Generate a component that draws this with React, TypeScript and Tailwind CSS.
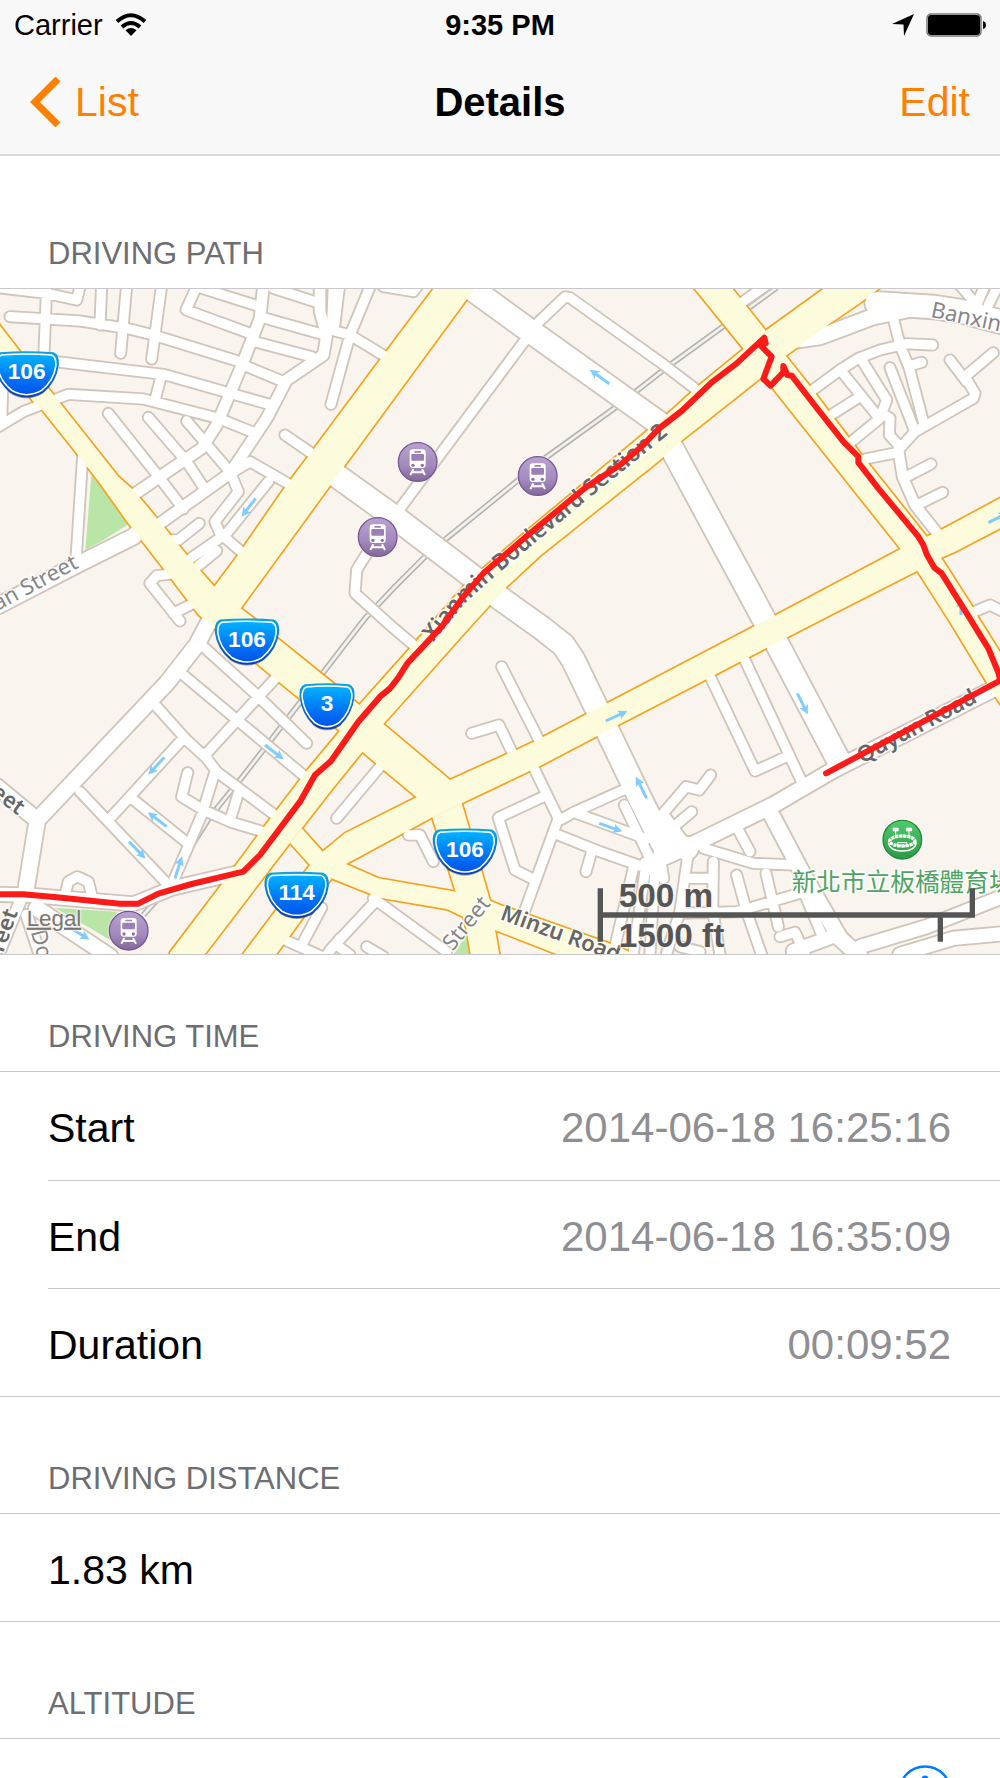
import type { ReactNode } from "react";

// Map drawing units: 3 per pixel at a width of 1000px.
const streets = [
  {
    width: 28,
    d: `M30 95L240 108L380 130L460 150L720 230 M-5 8L140 25L230 45L240 5 M140 5L132 205 M305 0L300 120 M380 0L362 205 M485 0L455 222
    M150 228L490 268L690 325L815 360 M-5 425L70 380L205 328L430 342L655 400L755 440 M8 300L5 410 M482 280L465 345
    M590 5L558 75L750 145 M590 5L780 65 M820 10L960 55 M790 98L975 150 M765 170L935 215 M730 240L850 290 M1000 5L995 130
    M325 385L480 580L550 672 M445 397L560 530L618 618 M560 408L690 560L715 620L645 710L660 745L735 810
    M700 560L750 530L875 602 M805 590L680 745L565 825 M598 715L535 765L505 765 M650 797L580 855 M855 450L945 512
    M505 868L470 872L450 895L540 1008 M520 985L580 955 M248 515L228 825
    M1110 5L1050 150L993 358 M1018 5L1003 130 M975 130L1050 150L1165 220 M1150 5L1240 20L1255 0
    M1572 170L1204 665 M1615 112L1695 36L1710 38L1990 238L2090 315 M2215 60L2300 0 M1110 790L1070 855L1065 925L1170 1020L1250 1088
    M2680 100L2700 180L2728 250L2770 410 M2798 180L2720 176L2640 195L2575 220L2520 255L2425 325 M2765 232L2730 242
    M2670 248L2745 440 M2585 225L2660 345L2645 385L2670 400L2668 450L2695 480 M2525 260L2630 390 M2485 395L2580 335
    M2548 475L2640 400 M2580 525L2695 502 M2695 495L2745 440L2920 340L2925 325L2895 275L2980 203 M2850 225L2900 290
    M2793 537L2720 575 M2828 622L2755 658 M3010 980L2970 960L2900 990 M2880 0L2930 60 M2955 0L2930 60 M2995 0L2965 60
    M610 1085L770 1230L920 1375 M550 1170L915 1475 M470 1265L560 1365L620 1420L650 1460L835 1598 M835 1170L620 1405
    M545 1365L335 1595 M240 1520L500 1795 M395 1540L560 1672 M645 1460L605 1590L515 1800
    M563 1463L545 1535L610 1575L690 1610L795 1642 M715 1525L692 1600 M195 1830L205 1790L232 1775L265 1790L275 1830
    M965 1868L905 1980 M855 1965L960 2012 M1020 1960L980 2010 M1140 1445L1010 1600
    M1505 1145L1622 1375 M1600 1445L1675 1600L1575 1875 M1415 1345L1497 1320L1540 1410 M1630 1535L1495 1598L1545 1755L1595 1780
    M1680 1605L1725 1580L1885 1508 M1730 1585L1940 1662 M1675 1650L1800 1700L1965 1758 M1873 1560L1945 1710 M1775 1700L1758 1760
    M1225 1650L1260 1650L1300 1730 M1130 1845L990 1995 M1120 1840L1340 2000 M1100 1985L1150 2015 M1010 1980L1050 2010
    M1900 1750L1840 2005 M1935 1760L1900 2005 M1965 1750L1950 2005
    M2230 1115L2405 1490 M2128 1170L2265 1458L2365 1412 M2215 1635L2250 1700 M2110 1690L2260 1735L2385 1740
    M2132 1470L2098 1515L2058 1505L1990 1585 M2075 1580L2030 1618 M2065 1700L2040 1880L2000 2005 M2140 1730L2138 1875L2160 2010
    M2060 1780L2140 1780 M2210 1770L2240 1880L2285 2010 M2298 1765L2335 1925 M2040 1885L2210 1880L2410 1822 M2415 1830L2470 1960
    M2340 1955L2385 1942L2415 2005 M2040 1985L2100 2000`,
  },
  { width: 32, d: "M790 5L780 100L730 230L650 420L605 490L480 575L400 630 M960 5L960 80L980 150L970 210L860 285L800 400L690 565L480 715 M1990 1590L2060 1685 M60 1850L0 1995 M80 1890L120 2010" },
  { width: 40, d: "M-10 1828L80 1830L400 1857L515 1810L750 1755 M2380 1998L2510 1950 M2580 1985L2780 1925L3020 1830 M3020 1945L2860 1960L2700 2008" },
  {
    width: 46,
    d: "M635 995L590 1080L500 1195L112 1605L78 1815 M-10 1505L105 1600 M-5 962L230 840L400 755L430 725 M2390 165L2460 155L2620 95L2740 70 M2315 1590L2410 1770L2520 1960L2580 2015 M3000 1202L2500 1455L2320 1560L2095 1670L1940 1740 M110 1870L330 2015",
  },
  { width: 30, d: "M2695 495L2708 575L2745 660L2820 755 M1970 1660L1990 1780" },
  { width: 68, d: "M1380 -15L1580 131L1985 420 M2010 480L2320 1055L2515 1425 M1000 565L1195 705L1440 892 M1480 925L1620 1025L1690 1080L1720 1125L1920 1540L1985 1670L2060 1690 M2630 55L2800 66L2880 78L3020 115" },
];

const avenues = [
  // route 106, north-west to the roundabout
  "-40,70 0,122 60,200 165,335 355,575 400,615 475,705 560,810 643,905 722,970 765,1003 835,1062 990,1187 1078,1260 1150,1317 1350,1485 1385,1555 1297,1597 1250,1537 1148,1452 1087,1400 1020,1338 900,1242 812,1170 770,1135 650,1035 597,990 490,850 382,710 300,595 237,513 125,373 100,350 -40,170",
  "643,905 712,813 860,600 932,505 1140,225 1300,12 1330,-20 1450,-20 1400,43 1035,540 722,970 640,1030 590,970",
  // Xianmin Boulevard
  "510,2020 510,2003 660,1805 710,1738 795,1622 920,1458 1018,1340 1078,1260 1237,1082 1390,905 1450,850 1590,730 1930,447 2010,380 2095,303 2230,193 2297,137 2470,12 2530,-30 2690,-30 2635,12 2585,50 2480,122 2395,185 2357,212 2283,278 2047,465 1980,525 1620,812 1520,905 1415,1020 1150,1317 1087,1400 990,1520 905,1630 870,1673 618,2003 600,2020",
  "720,2020 930,1740 870,1673 905,1630 968,1700 1035,1645 1250,1537 1350,1485 1520,1408 1602,1370 1755,1290 1822,1255 2255,1028 2323,993 2702,792 2780,755 2827,733 3000,640 3060,610 3060,695 3000,730 2865,800 2823,818 2752,857 2495,988 2292,1093 1860,1317 1620,1443 1385,1555 1297,1597 1038,1737 1135,1780 1367,1820 1400,1900 1340,1872 1140,1838 995,1780 832,2003 820,2020",
  "1297,1597 1385,1555 1470,1847 1500,1860 1850,1983 1930,2020 1710,2020 1660,2003 1485,1935 1500,2020 1414,2020 1400,1935 1390,1895 1367,1820",
  "2060,-20 2085,12 2232,193 2283,278 2315,305 2702,792 2752,857 2850,1010 2953,1180 2980,1225 3030,1300 3030,1150 2935,998 2920,970 2823,818 2780,755 2585,510 2425,298 2357,212 2297,137 2198,12 2180,-20",
];

const railway =
  "M2330 8L2010 240L1840 372L1640 516L1340 760L1270 820L1185 905L1095 1000L960 1175L720 1485L630 1595L570 1690L520 1790L430 1890";

const route =
  "M-5 1828L70 1828L170 1837L360 1856L415 1856L475 1826L575 1797L730 1760L780 1710L900 1550L945 1470L993 1428L1075 1310L1140 1235L1170 1210L1195 1178L1222 1135L1325 1025L1390 935L1450 865L1590 745L1760 605L1860 540L1930 480L1975 432L2010 405L2045 378L2135 292L2210 235L2293 158L2297 175L2280 180L2315 215L2290 282L2312 302L2350 262L2350 243L2362 270L2375 272L2455 375L2530 470L2575 515L2575 533L2635 610L2755 755L2770 780L2780 808L2803 848L2825 865L2900 985L2965 1090L2996 1165L3000 1187L2478 1465";

const oneWays = [
  "M767 640L735 682",
  "M1828 296L1783 264",
  "M795 1380L838 1413",
  "M493 1417L456 1457",
  "M500 1625L457 1592",
  "M387 1670L425 1709",
  "M525 1780L541 1730",
  "M205 1925L254 1955",
  "M1817 1308L1867 1285",
  "M1940 1540L1915 1490",
  "M1798 1615L1851 1634",
  "M2392 1225L2416 1273",
  "M2965 713L3010 690",
  "M2883 990L2883 955",
];

const stations = [
  [1253, 531],
  [1613, 573],
  [1133, 756],
  [386, 1937],
];

const shields = [
  { x: 80, y: 268, label: "106" },
  { x: 741, y: 1070, label: "106" },
  { x: 981, y: 1264, label: "3" },
  { x: 890, y: 1830, label: "114" },
  { x: 1395, y: 1700, label: "106" },
];

const wideShield =
  "M-80 -64Q0 -70 80 -64Q96 -58 94 -28Q88 20 48 53Q25 67 0 67Q-25 67 -48 53Q-88 20 -94 -28Q-96 -58 -80 -64Z";
const narrowShield =
  "M-66 -64Q0 -70 66 -64Q82 -58 80 -28Q74 20 40 53Q22 67 0 67Q-22 67 -40 53Q-74 20 -80 -28Q-82 -58 -66 -64Z";

const Station = ({ x, y }: { x: number; y: number }) => (
  <g transform={`translate(${x} ${y})`}>
    <circle r="62" fill="#fff" opacity="0.8" />
    <circle r="58" fill="url(#station)" stroke="#77598f" strokeWidth="4" />
    <rect x="-24" y="-38" width="48" height="56" rx="9" fill="#fff" />
    <rect x="-10" y="-33" width="20" height="5" rx="2" fill="#9a80b4" />
    <rect x="-19" y="-24" width="38" height="20" rx="3" fill="#9a80b4" />
    <circle cx="-14" cy="10" r="5" fill="#8c71a7" />
    <circle cx="14" cy="10" r="5" fill="#8c71a7" />
    <path d="M-13 22L-22 39M13 22L22 39M-18 31H18" stroke="#fff" strokeWidth="6" />
  </g>
);

const Shield = ({ x, y, label }: { x: number; y: number; label: string }) => {
  const d = label.length > 1 ? wideShield : narrowShield;
  return (
    <g transform={`translate(${x} ${y})`}>
      <path d={d} transform="translate(0 5)" fill="#000" opacity="0.3" />
      <path d={d} fill="url(#shield)" stroke="url(#shieldEdge)" strokeWidth="5" />
      <path d={d} transform="scale(.93 .91)" fill="none" stroke="#fff" strokeWidth="5" />
      <text
        y="15"
        textAnchor="middle"
        fontSize="68"
        fontWeight="700"
        fill="#fff"
        className="font-['Liberation_Sans',sans-serif]"
      >
        {label}
      </text>
    </g>
  );
};

const DrivingMap = () => (
  <svg
    viewBox="0 12 3000 1995"
    role="img"
    aria-label="Driving path"
    className="block w-full h-auto border-y border-[#c8c7cc] font-['Noto_Sans','Noto_Sans_CJK_TC',sans-serif]"
  >
    <defs>
      <linearGradient id="station" x1="0" y1="0" x2="0" y2="1">
        <stop offset="0" stopColor="#b9a2d2" />
        <stop offset="0.6" stopColor="#a389bd" />
        <stop offset="1" stopColor="#836898" />
      </linearGradient>
      <linearGradient id="stadium" x1="0" y1="0" x2="0" y2="1">
        <stop offset="0" stopColor="#4ecb6c" />
        <stop offset="1" stopColor="#2c9a45" />
      </linearGradient>
      <linearGradient id="shield" x1="0" y1="0" x2="0" y2="1">
        <stop offset="0" stopColor="#00b9ff" />
        <stop offset="0.6" stopColor="#0073f5" />
        <stop offset="1" stopColor="#0050ea" />
      </linearGradient>
      <linearGradient id="shieldEdge" x1="0" y1="0" x2="0" y2="1">
        <stop offset="0" stopColor="#12a0de" />
        <stop offset="1" stopColor="#0b3cab" />
      </linearGradient>
      <marker id="arrow" viewBox="0 0 10 10" refX="4" refY="5" markerWidth="28" markerHeight="28" markerUnits="userSpaceOnUse" orient="auto">
        <path d="M0 0L10 5L0 10L2 5Z" fill="#7fcdff" />
      </marker>
      <path id="boulevard" d="M1300 1072L1392 957L1482 876L1764 642L2100 372" />
    </defs>

    <rect y="12" width="3000" height="1995" fill="#f9f4ed" />
    <g fill="#b9e5a6">
      <path d="M275 560L390 715L310 765L256 795Z" />
      <path d="M165 1868L350 1880L340 1970Z" />
      <path d="M1405 1940L1415 2010H1360Z" />
    </g>

    <g fill="none">
      <path d={railway} stroke="#b5b5b5" strokeWidth="18" />
      <path d={railway} stroke="#f5f2ec" strokeWidth="8" />
    </g>

    <g fill="none" stroke="#d0c5ba" strokeLinecap="round" strokeLinejoin="round">
      {streets.map((s) => (
        <path key={s.width} d={s.d} strokeWidth={s.width + 11} />
      ))}
    </g>
    <g fill="none" stroke="#f6a21b" strokeWidth="10">
      {avenues.map((points) => (
        <polygon key={points} points={points} />
      ))}
    </g>
    <g fill="none" stroke="#fff" strokeLinecap="round" strokeLinejoin="round">
      {streets.map((s) => (
        <path key={s.width} d={s.d} strokeWidth={s.width} />
      ))}
    </g>
    <g fill="#fcfbdb">
      {avenues.map((points) => (
        <polygon key={points} points={points} />
      ))}
    </g>

    <g stroke="#7fcdff" strokeWidth="9">
      {oneWays.map((d) => (
        <path key={d} d={d} markerEnd="url(#arrow)" />
      ))}
    </g>

    <g fill="#666" fontSize="66" fontWeight="600" stroke="#fff" strokeOpacity="0.8" strokeWidth="10" strokeLinejoin="round" paintOrder="stroke">
      <text fontSize="68">
        <textPath href="#boulevard">Xianmin Boulevard Section 2</textPath>
      </text>
      <text transform="translate(2586 1436) rotate(-28)">Quyun Road</text>
      <text transform="translate(1498 1902) rotate(20)">Minzu Road</text>
      <text transform="translate(-30 1530) rotate(36)">eet</text>
      <text transform="translate(0 2030) rotate(-70)">treet</text>
      <g fill="#868686" fontWeight="400">
        <text transform="translate(1358 2000) rotate(-51)">Street</text>
        <text transform="translate(2790 95) rotate(12)">Banxin</text>
        <text transform="translate(-8 978) rotate(-28)">an Street</text>
        <text transform="translate(92 1940) rotate(75)">Do</text>
      </g>
      <text x="2375" y="1819" fontSize="74" fontWeight="400" fill="#4da563" className="font-['Noto_Sans_CJK_TC',sans-serif]">
        新北市立板橋體育場
      </text>
    </g>

    <path d={route} fill="none" stroke="#ff1a1a" strokeWidth="18" strokeLinecap="round" strokeLinejoin="round" />

    {stations.map(([x, y]) => (
      <Station key={`${x}-${y}`} x={x} y={y} />
    ))}
    {shields.map((s) => (
      <Shield key={`${s.x}-${s.y}`} {...s} />
    ))}

    <g transform="translate(2707 1664)">
      <circle r="63" fill="#fff" opacity="0.8" />
      <circle r="58" fill="url(#stadium)" stroke="#25873c" strokeWidth="4" />
      <g fill="none" stroke="#fff">
        <path d="M-28 -35H-12V-26H-28ZM12 -35H28V-26H12Z" fill="#fff" strokeWidth="2" />
        <path d="M-20 -26V-10M20 -26V-10" strokeWidth="3" />
        <ellipse cy="4" rx="38" ry="15" strokeWidth="10" strokeDasharray="10 2" />
        <path d="M-42 8Q-38 34 0 34Q38 34 42 8" strokeWidth="4" />
        <path d="M-14 9H14V18H-14Z" strokeWidth="3" />
      </g>
    </g>

    <g className="font-['Liberation_Sans',sans-serif]" fill="#555" stroke="#f9f4ed" strokeOpacity="0.7" strokeWidth="8" paintOrder="stroke">
      <a href="#legal">
        <text x="80" y="1922" fontSize="67" fill="#777" textDecoration="underline">
          Legal
        </text>
      </a>
      <text x="1856" y="1865" fontSize="100" fontWeight="700">
        500 m
      </text>
      <text x="1856" y="1987" fontSize="100" fontWeight="700">
        1500 ft
      </text>
    </g>
    <path d="M1801 1810V1970M1794 1890H2917M2917 1810V1898M2821 1890V1970" fill="none" stroke="#555" strokeWidth="16" />
  </svg>
);

const StatusBar = () => (
  <div className="grid grid-cols-3 items-center h-[50px] px-[14px] text-[29px] leading-8">
    <div className="flex items-center gap-3">
      <span>Carrier</span>
      <svg width="32" height="24" viewBox="0 0 32 24" fill="none" stroke="#000" strokeWidth="4">
        <path d="M2 8.500Q16 -4 30 8.500" />
        <path d="M7 14Q16 6 25 14" />
        <path d="M16 23L10.500 17.200Q16 13 21.500 17.200Z" fill="#000" stroke="none" />
      </svg>
    </div>
    <span className="text-center font-bold">9:35 PM</span>
    <div className="flex items-center justify-end gap-3">
      <svg width="22" height="22" viewBox="0 0 22 22">
        <path d="M22 0L12 22L11.500 10.500L0 10Z" />
      </svg>
      <svg width="60" height="24" viewBox="0 0 60 24">
        <rect x="1" y="1" width="54" height="22" rx="4" fill="none" stroke="#777" strokeWidth="1.500" />
        <rect x="2" y="2" width="52" height="20" rx="3" />
        <path d="M57 8Q60 9 60 12Q60 15 57 16Z" />
      </svg>
    </div>
  </div>
);

const SectionTitle = ({ children, className = "min-h-[116px]" }: { children: ReactNode; className?: string }) => (
  <h2 className={`flex items-end pl-12 pb-4 text-[31px] leading-9 text-[#6d6d72] ${className}`}>{children}</h2>
);

const times = [
  { label: "Start", value: "2014-06-18 16:25:16" },
  { label: "End", value: "2014-06-18 16:35:09" },
  { label: "Duration", value: "00:09:52" },
];

export default function App() {
  return (
    <div className="h-screen overflow-hidden bg-white text-black font-['Liberation_Sans',Arial,sans-serif]">
      <header className="bg-[#f8f8f8] border-b-2 border-[#dadada]">
        <StatusBar />
        <nav className="grid grid-cols-3 items-center h-[104px] px-[30px] text-[41px] leading-[48px]">
          <button className="flex items-center gap-[14px] justify-self-start text-[#ff8000]">
            <svg width="31" height="50" viewBox="0 0 31 50" fill="none" stroke="currentColor" strokeWidth="7">
              <path d="M28 2L5 25L28 48" />
            </svg>
            List
          </button>
          <h1 className="text-center text-[40px] font-bold">Details</h1>
          <button className="justify-self-end text-[#ff8000]">Edit</button>
        </nav>
      </header>

      <main>
        <section>
          <SectionTitle className="min-h-[132px]">DRIVING PATH</SectionTitle>
          <DrivingMap />
        </section>

        <section>
          <SectionTitle>DRIVING TIME</SectionTitle>
          <dl className="border-y border-[#c8c7cc]">
            {times.map((t, i) => (
              <div key={t.label} className="pl-12">
                <div
                  className={`flex items-center justify-between min-h-[108px] pt-1 pr-[49px] text-[41px] leading-[48px] ${
                    i > 0 ? "border-t border-[#c8c7cc]" : ""
                  }`}
                >
                  <dt>{t.label}</dt>
                  <dd className="text-[42px] text-[#8e8e93]">{t.value}</dd>
                </div>
              </div>
            ))}
          </dl>
        </section>

        <section>
          <SectionTitle>DRIVING DISTANCE</SectionTitle>
          <p className="flex items-center min-h-[109px] pt-1 pl-12 border-y border-[#c8c7cc] text-[41px] leading-[48px]">
            1.83 km
          </p>
        </section>

        <section>
          <SectionTitle>ALTITUDE</SectionTitle>
          <div className="flex items-center justify-end min-h-[108px] pr-12 border-y border-[#c8c7cc]">
            <button aria-label="More info" className="text-[#007aff]">
              <svg width="54" height="54" viewBox="0 0 54 54" fill="none" stroke="currentColor" strokeWidth="2.500">
                <circle cx="27" cy="27" r="25.500" />
                <circle cx="27" cy="14" r="3.500" fill="currentColor" stroke="none" />
                <path d="M22 22H28V40M21 40H34" />
              </svg>
            </button>
          </div>
        </section>
      </main>
    </div>
  );
}
